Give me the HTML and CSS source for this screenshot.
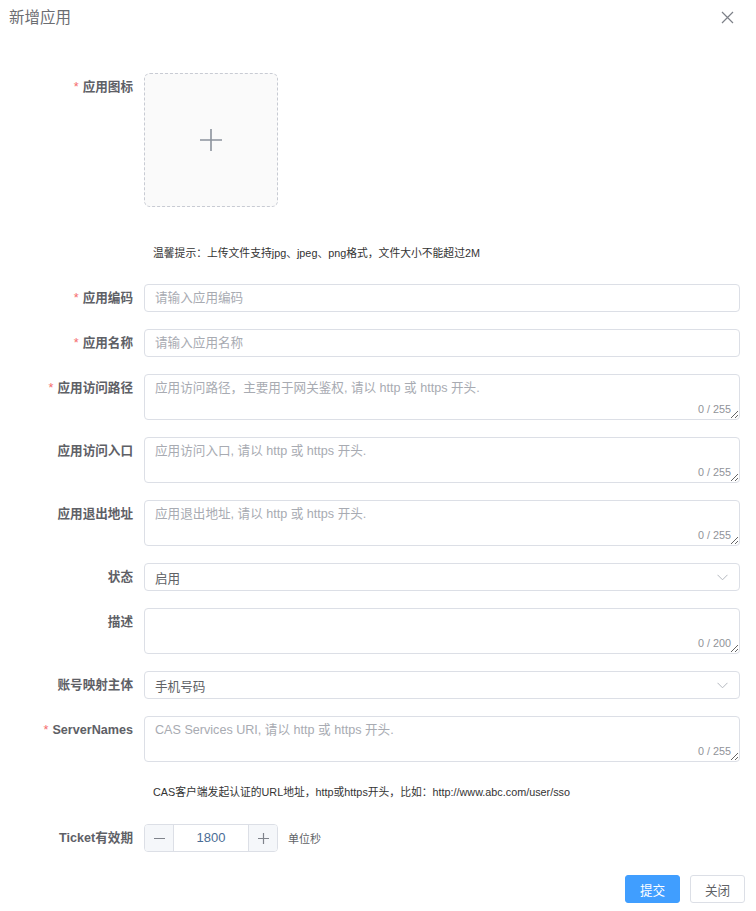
FILE: index.html
```html
<!DOCTYPE html>
<html lang="zh">
<head>
<meta charset="utf-8">
<title>新增应用</title>
<link rel="stylesheet" href="styles.css">
</head>
<body>
<div class="dialog">
  <div class="header">
    <span class="title">新增应用</span>
    <span class="close" aria-label="关闭">
      <svg width="13" height="13" viewBox="0 0 13 13"><path d="M1 1 L12 12 M12 1 L1 12" stroke="#7d8088" stroke-width="1.2" fill="none"/></svg>
    </span>
  </div>

  <form class="form">
    <div class="item item-last">
      <label class="label req">应用图标</label>
      <div class="content">
        <div class="upload">
          <svg width="24" height="24" viewBox="0 0 24 24"><path d="M12 1 V23 M1 12 H23" stroke="#8c939d" stroke-width="1.6" fill="none"/></svg>
        </div>
      </div>
    </div>
    <div class="tip tip-upload">温馨提示：上传文件支持jpg、jpeg、png格式，文件大小不能超过2M</div>

    <div class="item">
      <label class="label req">应用编码</label>
      <div class="content"><input class="input" placeholder="请输入应用编码"></div>
    </div>
    <div class="item">
      <label class="label req">应用名称</label>
      <div class="content"><input class="input" placeholder="请输入应用名称"></div>
    </div>
    <div class="item">
      <label class="label req">应用访问路径</label>
      <div class="content area-wrap">
        <textarea class="area" placeholder="应用访问路径，主要用于网关鉴权, 请以 http 或 https 开头."></textarea>
        <span class="count">0 / 255</span>
      </div>
    </div>
    <div class="item">
      <label class="label">应用访问入口</label>
      <div class="content area-wrap">
        <textarea class="area" placeholder="应用访问入口, 请以 http 或 https 开头."></textarea>
        <span class="count">0 / 255</span>
      </div>
    </div>
    <div class="item">
      <label class="label">应用退出地址</label>
      <div class="content area-wrap">
        <textarea class="area" placeholder="应用退出地址, 请以 http 或 https 开头."></textarea>
        <span class="count">0 / 255</span>
      </div>
    </div>
    <div class="item">
      <label class="label">状态</label>
      <div class="content">
        <div class="select">
          <span class="select-val">启用</span>
          <svg class="arrow" width="11" height="7" viewBox="0 0 11 7"><path d="M0.5 0.8 L5.5 5.8 L10.5 0.8" stroke="#b4b8bf" stroke-width="1" fill="none"/></svg>
        </div>
      </div>
    </div>
    <div class="item">
      <label class="label">描述</label>
      <div class="content area-wrap">
        <textarea class="area"></textarea>
        <span class="count">0 / 200</span>
      </div>
    </div>
    <div class="item">
      <label class="label">账号映射主体</label>
      <div class="content">
        <div class="select">
          <span class="select-val">手机号码</span>
          <svg class="arrow" width="11" height="7" viewBox="0 0 11 7"><path d="M0.5 0.8 L5.5 5.8 L10.5 0.8" stroke="#b4b8bf" stroke-width="1" fill="none"/></svg>
        </div>
      </div>
    </div>
    <div class="item item-last">
      <label class="label req">ServerNames</label>
      <div class="content area-wrap">
        <textarea class="area" placeholder="CAS Services URI, 请以 http 或 https 开头."></textarea>
        <span class="count">0 / 255</span>
      </div>
    </div>
    <div class="tip tip-cas">CAS客户端发起认证的URL地址，http或https开头，比如：http://www.abc.com/user/sso</div>

    <div class="item item-last">
      <label class="label">Ticket有效期</label>
      <div class="content row">
        <div class="number">
          <span class="num-btn minus"><svg width="11" height="11" viewBox="0 0 11 11"><path d="M0 5.5 H11" stroke="#7f838b" stroke-width="1.2"/></svg></span>
          <span class="num-val">1800</span>
          <span class="num-btn plus"><svg width="11" height="11" viewBox="0 0 11 11"><path d="M0 5.5 H11 M5.5 0 V11" stroke="#7f838b" stroke-width="1.2"/></svg></span>
        </div>
        <span class="unit">单位秒</span>
      </div>
    </div>
  </form>

  <div class="footer">
    <button class="btn primary" type="button">提交</button>
    <button class="btn" type="button">关闭</button>
  </div>
</div>
</body>
</html>
```

FILE: styles.css
```css
* { box-sizing: border-box; }
html, body {
  margin: 0;
  padding: 0;
  background: #ffffff;
}
body {
  font-family: "Liberation Sans", Arial, "Noto Sans CJK SC", sans-serif;
  color: #606266;
  width: 756px;
}
.dialog {
  width: 756px;
  display: flex;
  flex-direction: column;
}
.header {
  height: 35px;
  display: flex;
  align-items: center;
  justify-content: space-between;
  padding: 0 22px 0 9px;
}
.title {
  font-size: 15.5px;
  color: #6b6d72;
  line-height: 20px;
}
.close {
  display: flex;
  width: 13px;
  height: 13px;
}
.form {
  margin-top: 38px;
  padding-right: 16px;
  display: flex;
  flex-direction: column;
}
.item {
  display: flex;
  align-items: flex-start;
  margin-bottom: 17px;
}
.item.item-last { margin-bottom: 0; }
.label {
  width: 144px;
  flex-shrink: 0;
  padding-right: 11px;
  text-align: right;
  font-size: 12.6px;
  font-weight: bold;
  line-height: 28px;
  color: #5e6066;
}
.label.req::before {
  content: "*";
  color: #f56c6c;
  margin-right: 4px;
  font-weight: normal;
}
.content {
  flex: 1;
  min-width: 0;
}
.upload {
  width: 134px;
  height: 134px;
  border: 1px dashed #c8cbd3;
  border-radius: 6px;
  background: #fafafa;
  display: flex;
  align-items: center;
  justify-content: center;
}
.tip {
  padding-left: 153px;
  font-size: 10.8px;
  line-height: 20px;
  color: #333333;
}
.tip-upload { margin-top: 36px; margin-bottom: 21px; }
.tip-cas { margin-top: 20px; margin-bottom: 22px; }
.input {
  display: block;
  width: 100%;
  height: 28px;
  border: 1px solid #dcdfe6;
  border-radius: 4px;
  padding: 0 10px;
  font-family: inherit;
  font-size: 12.6px;
  color: #606266;
  outline: none;
  background: #fff;
}
.input::placeholder, .area::placeholder {
  color: #a8abb2;
}
.area-wrap { position: relative; }
.area {
  display: block;
  width: 100%;
  height: 46px;
  border: 1px solid #dcdfe6;
  border-radius: 4px;
  padding: 4px 10px;
  font-family: inherit;
  font-size: 12.6px;
  line-height: 19px;
  color: #606266;
  outline: none;
  resize: vertical;
  background: #fff;
}
.count {
  position: absolute;
  right: 9px;
  bottom: 4px;
  font-size: 10.8px;
  line-height: 14px;
  color: #909399;
  background: #fff;
}
.select {
  height: 28px;
  border: 1px solid #dcdfe6;
  border-radius: 4px;
  padding: 0 11px 0 10px;
  display: flex;
  align-items: center;
  justify-content: space-between;
  background: #fff;
}
.select-val {
  font-size: 12.6px;
  color: #606266;
}
.arrow { display: block; }
.row {
  display: flex;
  align-items: center;
  gap: 10px;
}
.number {
  width: 134px;
  height: 28px;
  border: 1px solid #dcdfe6;
  border-radius: 4px;
  display: flex;
  overflow: hidden;
}
.num-btn {
  width: 29px;
  flex-shrink: 0;
  background: #f5f7fa;
  display: flex;
  align-items: center;
  justify-content: center;
}
.minus { border-right: 1px solid #dcdfe6; }
.plus { border-left: 1px solid #dcdfe6; }
.num-val {
  flex: 1;
  text-align: center;
  line-height: 26px;
  font-size: 13px;
  color: #4a6d96;
}
.unit {
  font-size: 11px;
  color: #606266;
}
.footer {
  margin-top: 23px;
  padding-right: 11px;
  display: flex;
  justify-content: flex-end;
  gap: 10px;
}
.btn {
  width: 55px;
  height: 28px;
  border: 1px solid #dcdfe6;
  border-radius: 3px;
  background: #fff;
  font-family: inherit;
  font-size: 12.6px;
  color: #606266;
  padding: 0;
}
.btn.primary {
  background: #409eff;
  border-color: #409eff;
  color: #ffffff;
}
```
